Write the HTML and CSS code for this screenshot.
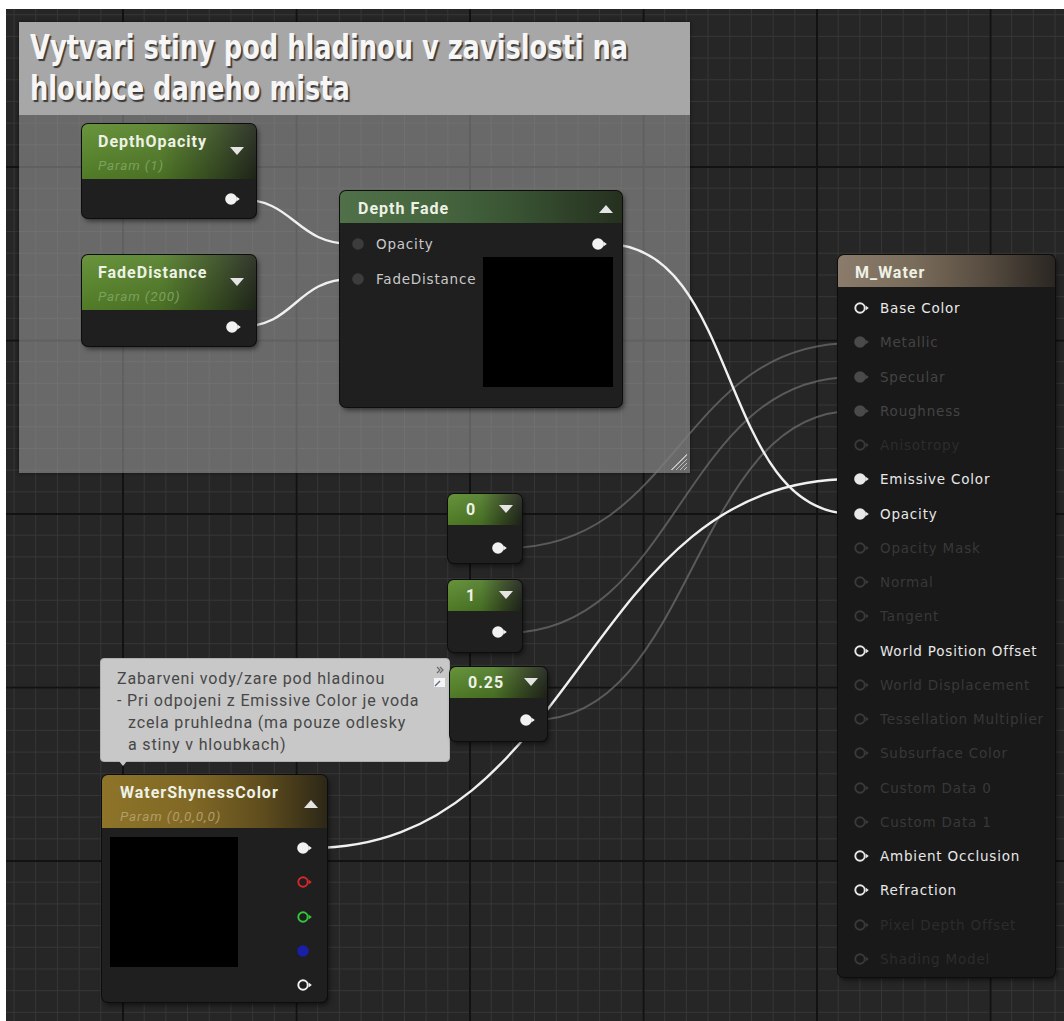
FILE: index.html
```html
<!DOCTYPE html>
<html lang="cs">
<head>
<meta charset="utf-8">
<title>M_Water – Material Graph</title>
<link rel="stylesheet" href="styles.css">
</head>
<body>
<svg class="defs" width="0" height="0" aria-hidden="true">
  <defs>
    <symbol id="pin-fill" viewBox="0 0 16 12">
      <circle cx="6" cy="6" r="5.8" fill="currentColor"/>
      <path d="M11.4 3.6 L14.8 6 L11.4 8.4 Z" fill="currentColor"/>
    </symbol>
    <symbol id="pin-ring" viewBox="0 0 16 12">
      <circle cx="6" cy="6" r="4.7" fill="none" stroke="currentColor" stroke-width="1.9"/>
      <path d="M11.6 3.6 L14.8 6 L11.6 8.4 Z" fill="currentColor"/>
    </symbol>
    <symbol id="pin-dot" viewBox="0 0 16 12">
      <circle cx="6" cy="6" r="5.8" fill="currentColor"/>
    </symbol>
  </defs>
</svg>

<div class="graph">
  <!-- comment frame around the depth fade group -->
  <div class="comment">
    <div class="comment-head"><span class="comment-text">Vytvari stiny pod hladinou v zavislosti na<br>hloubce daneho mista</span></div>
    <div class="comment-grip"></div>
  </div>

  <!-- connections -->
  <svg class="wires" width="1058" height="1012" viewBox="0 0 1058 1012">
    <g class="wire-dim">
      <path d="M500 539 C673 539 674 334 847 334"/>
      <path d="M500 624 C673 624 674 368 847 368"/>
      <path d="M528 711 C688 711 687 402 847 402"/>
    </g>
    <g class="wire">
      <path d="M232 190 C289 190 289 235 346 235"/>
      <path d="M233 318 C290 318 289 270 346 270"/>
      <path d="M600 235 C735 235 712 505 847 505"/>
      <path d="M305 839 C576 839 576 470 847 470"/>
    </g>
  </svg>

  <!-- bubble note -->
  <div class="note">
    <div class="note-line">Zabarveni vody/zare pod hladinou</div>
    <div class="note-line">- Pri odpojeni z Emissive Color je voda</div>
    <div class="note-line indent">zcela pruhledna (ma pouze odlesky</div>
    <div class="note-line indent">a stiny v hloubkach)</div>
    <svg class="note-icons" width="14" height="26" viewBox="0 0 14 26">
      <path d="M5 2 L8 5 L5 8 M8 2 L11 5 L8 8" fill="none" stroke="#6a6a6a" stroke-width="1.2"/>
      <rect x="2" y="13" width="11" height="9" fill="#f4f4f4"/>
      <path d="M3 21 L8 16" stroke="#5d6f86" stroke-width="1.4"/>
    </svg>
  </div>

  <!-- scalar parameter nodes -->
  <div class="node param n-depthopacity">
    <div class="head head-param">
      <div class="head-text">
        <div class="title">DepthOpacity</div>
        <div class="sub sub-green">Param (1)</div>
      </div>
      <span class="tri tri-down"></span>
    </div>
    <div class="body out-body pad-14 pr-15">
      <svg class="pin pin-white"><use href="#pin-fill"/></svg>
    </div>
  </div>

  <div class="node param n-fadedistance">
    <div class="head head-param">
      <div class="head-text">
        <div class="title">FadeDistance</div>
        <div class="sub sub-green">Param (200)</div>
      </div>
      <span class="tri tri-down"></span>
    </div>
    <div class="body out-body pad-11 pr-14">
      <svg class="pin pin-white"><use href="#pin-fill"/></svg>
    </div>
  </div>

  <!-- depth fade expression -->
  <div class="node n-depthfade">
    <div class="head head-fade">
      <div class="head-text"><div class="title">Depth Fade</div></div>
      <span class="tri tri-up tri-fade"></span>
    </div>
    <div class="body fade-body">
      <div class="inputs">
        <div class="in-row"><svg class="pin pin-grey"><use href="#pin-dot"/></svg><span class="label">Opacity</span></div>
        <div class="in-row"><svg class="pin pin-grey"><use href="#pin-dot"/></svg><span class="label">FadeDistance</span></div>
      </div>
      <div class="fade-right">
        <svg class="pin pin-white fade-out"><use href="#pin-fill"/></svg>
        <div class="preview fade-preview"></div>
      </div>
    </div>
  </div>

  <!-- constants -->
  <div class="node param n-const0">
    <div class="head head-const">
      <span class="value">0</span>
      <span class="tri tri-down tri-const"></span>
    </div>
    <div class="body out-body pad-17 pr-14">
      <svg class="pin pin-white"><use href="#pin-fill"/></svg>
    </div>
  </div>

  <div class="node param n-const1">
    <div class="head head-const">
      <span class="value">1</span>
      <span class="tri tri-down tri-const"></span>
    </div>
    <div class="body out-body pad-15 pr-14">
      <svg class="pin pin-white"><use href="#pin-fill"/></svg>
    </div>
  </div>

  <div class="node param n-const025">
    <div class="head head-const">
      <span class="value">0.25</span>
      <span class="tri tri-down tri-const"></span>
    </div>
    <div class="body out-body pad-16 pr-11">
      <svg class="pin pin-white"><use href="#pin-fill"/></svg>
    </div>
  </div>

  <!-- vector parameter -->
  <div class="node n-shyness">
    <div class="head head-gold">
      <div class="head-text">
        <div class="title">WaterShynessColor</div>
        <div class="sub sub-gold">Param (0,0,0,0)</div>
      </div>
      <span class="tri tri-up tri-gold"></span>
    </div>
    <div class="body shyness-body">
      <div class="preview shyness-preview"></div>
      <div class="out-col">
        <svg class="pin pin-white"><use href="#pin-fill"/></svg>
        <svg class="pin pin-red"><use href="#pin-ring"/></svg>
        <svg class="pin pin-green"><use href="#pin-ring"/></svg>
        <svg class="pin pin-blue"><use href="#pin-dot"/></svg>
        <svg class="pin pin-white"><use href="#pin-ring"/></svg>
      </div>
    </div>
  </div>

  <!-- material result node -->
  <div class="node n-water">
    <div class="head head-water">
      <div class="head-text"><div class="title">M_Water</div></div>
    </div>
    <div class="body water-body">
      <div class="row on"><svg class="pin"><use href="#pin-ring"/></svg><span class="label">Base Color</span></div>
      <div class="row dim"><svg class="pin"><use href="#pin-fill"/></svg><span class="label">Metallic</span></div>
      <div class="row dim"><svg class="pin"><use href="#pin-fill"/></svg><span class="label">Specular</span></div>
      <div class="row dim"><svg class="pin"><use href="#pin-fill"/></svg><span class="label">Roughness</span></div>
      <div class="row off dark"><svg class="pin"><use href="#pin-ring"/></svg><span class="label">Anisotropy</span></div>
      <div class="row on"><svg class="pin"><use href="#pin-fill"/></svg><span class="label">Emissive Color</span></div>
      <div class="row on"><svg class="pin"><use href="#pin-fill"/></svg><span class="label">Opacity</span></div>
      <div class="row off"><svg class="pin"><use href="#pin-ring"/></svg><span class="label">Opacity Mask</span></div>
      <div class="row off"><svg class="pin"><use href="#pin-ring"/></svg><span class="label">Normal</span></div>
      <div class="row off"><svg class="pin"><use href="#pin-ring"/></svg><span class="label">Tangent</span></div>
      <div class="row on"><svg class="pin"><use href="#pin-ring"/></svg><span class="label">World Position Offset</span></div>
      <div class="row off"><svg class="pin"><use href="#pin-ring"/></svg><span class="label">World Displacement</span></div>
      <div class="row off"><svg class="pin"><use href="#pin-ring"/></svg><span class="label">Tessellation Multiplier</span></div>
      <div class="row off"><svg class="pin"><use href="#pin-ring"/></svg><span class="label">Subsurface Color</span></div>
      <div class="row off"><svg class="pin"><use href="#pin-ring"/></svg><span class="label">Custom Data 0</span></div>
      <div class="row off"><svg class="pin"><use href="#pin-ring"/></svg><span class="label">Custom Data 1</span></div>
      <div class="row on"><svg class="pin"><use href="#pin-ring"/></svg><span class="label">Ambient Occlusion</span></div>
      <div class="row on"><svg class="pin"><use href="#pin-ring"/></svg><span class="label">Refraction</span></div>
      <div class="row off dark"><svg class="pin"><use href="#pin-ring"/></svg><span class="label">Pixel Depth Offset</span></div>
      <div class="row off dark"><svg class="pin"><use href="#pin-ring"/></svg><span class="label">Shading Model</span></div>
    </div>
  </div>
</div>
</body>
</html>
```

FILE: styles.css
```css
html, body {
  margin: 0;
  background: #ffffff;
}

body {
  padding: 9px 0 0 6px;
  width: 1064px;
  height: 1021px;
  box-sizing: border-box;
  overflow: hidden;
  font-family: "Roboto", "DejaVu Sans", sans-serif;
}

.defs {
  position: absolute;
  width: 0;
  height: 0;
}

/* editor canvas with minor and major grid lines */
.graph {
  position: relative;
  width: 1058px;
  height: 1012px;
  overflow: hidden;
  background:
    linear-gradient(to right, #121212 2px, transparent 2px) 116px 0 / 173.5px 100% repeat-x,
    linear-gradient(to bottom, #121212 2px, transparent 2px) 0 157px / 100% 173.5px repeat-y,
    linear-gradient(to right, #363636 1px, transparent 1px) 7.56px 0 / 21.6875px 100%,
    linear-gradient(to bottom, #363636 1px, transparent 1px) 0 5.19px / 100% 21.6875px,
    #262626;
}

/* comment frame */
.comment {
  position: absolute;
  left: 13px;
  top: 13px;
  width: 671px;
  height: 451px;
  background: rgba(160, 160, 160, 0.55);
  box-shadow: 0 0 3px rgba(0, 0, 0, 0.6);
}

.comment-head {
  height: 93px;
  box-sizing: border-box;
  padding: 5px 0 0 11px;
  background: #a7a7a7;
  overflow: hidden;
}

.comment-text {
  display: inline-block;
  white-space: nowrap;
  transform: scaleX(0.84);
  transform-origin: left top;
  color: #f6f6f6;
  font-family: "DejaVu Sans Condensed", "DejaVu Sans", sans-serif;
  font-weight: 700;
  font-size: 34px;
  line-height: 41px;
  text-shadow: 2px 2px 1px rgba(0, 0, 0, 0.65);
}

.comment-grip {
  position: absolute;
  right: 3px;
  bottom: 3px;
  width: 18px;
  height: 18px;
  background: repeating-linear-gradient(135deg, transparent 0 2px, rgba(220, 220, 220, 0.75) 2px 3px);
  clip-path: polygon(100% 0, 100% 100%, 0 100%);
}

/* wires */
.wires {
  position: absolute;
  left: 0;
  top: 0;
}

.wires path {
  fill: none;
}

.wire path {
  stroke: #f0f0f0;
  stroke-width: 2.4;
}

.wire-dim path {
  stroke: rgba(125, 125, 125, 0.6);
  stroke-width: 2;
}

/* bubble note */
.note {
  position: absolute;
  left: 94px;
  top: 649px;
  width: 350px;
  height: 104px;
  box-sizing: border-box;
  padding: 9px 0 0 16px;
  background: #c8c8c8;
  border: 1px solid #b0b0b0;
  border-radius: 4px;
  color: #474747;
  font-family: "Roboto", sans-serif;
  font-size: 16px;
  line-height: 22px;
  letter-spacing: 0.85px;
  white-space: nowrap;
}

.note::after {
  content: "";
  position: absolute;
  left: 18px;
  bottom: -5px;
  width: 0;
  height: 0;
  border-left: 4px solid transparent;
  border-right: 4px solid transparent;
  border-top: 5px solid #c8c8c8;
}

.note-line.indent {
  padding-left: 11px;
}

.note-icons {
  position: absolute;
  right: 3px;
  top: 6px;
}

/* nodes */
.node {
  position: absolute;
  display: flex;
  flex-direction: column;
  background: #1f1f1f;
  border-radius: 6px;
  box-shadow: 0 0 0 1px #0d0d0d, 2px 3px 5px rgba(0, 0, 0, 0.55);
  overflow: hidden;
}

.head {
  display: flex;
  justify-content: space-between;
  align-items: flex-start;
  flex: none;
  box-sizing: border-box;
}

.head-param {
  height: 55px;
  padding-left: 16px;
  background:
    linear-gradient(to bottom, rgba(255, 255, 255, 0.08), rgba(0, 0, 0, 0.12)),
    linear-gradient(to right, #5c8b2c 0%, #547f29 45%, #3a5222 75%, #22281c 100%);
}

.head-const {
  height: 31px;
  padding-left: 18px;
  align-items: center;
  background:
    linear-gradient(to bottom, rgba(255, 255, 255, 0.08), rgba(0, 0, 0, 0.12)),
    linear-gradient(to right, #5a8a2b 0%, #4f7c28 45%, #35491f 75%, #1f241b 100%);
}

.head-fade {
  height: 32px;
  padding-left: 18px;
  background: linear-gradient(to right, #4f7049 0%, #46663f 35%, #3a5534 60%, #25301f 100%);
}

.head-gold {
  height: 53px;
  padding-left: 18px;
  background: linear-gradient(to right, #8e7429 0%, #806825 40%, #5e4c1d 72%, #2c2717 100%);
}

.head-water {
  height: 32px;
  padding-left: 17px;
  background: linear-gradient(to right, #8a7b6a 0%, #7a6c5b 35%, #574c40 68%, #2a2622 100%);
}

.head-text {
  padding-top: 9px;
}

.title {
  color: #eef2e6;
  font-family: "Roboto", sans-serif;
  font-weight: 700;
  font-size: 16px;
  line-height: 18px;
  letter-spacing: 1px;
  white-space: nowrap;
}

.sub {
  margin-top: 6px;
  font-family: "Roboto", sans-serif;
  font-style: italic;
  font-size: 13.5px;
  line-height: 16px;
  letter-spacing: 0.9px;
  white-space: nowrap;
}

.sub-green {
  color: #7ba15c;
}

.sub-gold {
  color: #b09d68;
}

.value {
  color: #eef2e6;
  font-weight: 700;
  font-size: 16px;
  letter-spacing: 1px;
}

/* dropdown / collapse arrows */
.tri {
  flex: none;
  width: 0;
  height: 0;
  border-left: 7px solid transparent;
  border-right: 7px solid transparent;
}

.tri-down {
  margin: 23px 12px 0 0;
  border-top: 8px solid #e4e4e4;
}

.tri-const {
  margin: -2px 9px 0 0;
}

.tri-up {
  border-bottom: 8px solid #e4e4e4;
}

.tri-fade {
  margin: 14px 9px 0 0;
}

.tri-gold {
  margin: 25px 9px 0 0;
}

/* node bodies */
.body {
  flex: 1;
  box-sizing: border-box;
}

.out-body {
  display: flex;
  justify-content: flex-end;
  align-items: flex-start;
}

.pad-11 { padding-top: 11px; }
.pad-14 { padding-top: 14px; }
.pad-15 { padding-top: 15px; }
.pad-16 { padding-top: 16px; }
.pad-17 { padding-top: 17px; }
.pr-11 { padding-right: 11px; }
.pr-14 { padding-right: 14px; }
.pr-15 { padding-right: 15px; }

.pin {
  display: block;
  flex: none;
  width: 16px;
  height: 12px;
  overflow: visible;
}

.pin-white { color: #f2f2f2; }
.pin-grey { color: #3c3c3c; }
.pin-red { color: #d8262a; }
.pin-green { color: #33c83a; }
.pin-blue { color: #1a1fa8; }

.preview {
  background: #000000;
  flex: none;
}

.label {
  font-family: "DejaVu Sans", sans-serif;
  font-size: 13.5px;
  letter-spacing: 0.8px;
  white-space: nowrap;
}

/* node positions on the canvas */
.n-depthopacity { left: 76px; top: 115px; width: 174px; height: 94px; }
.n-fadedistance { left: 76px; top: 246px; width: 174px; height: 91px; }
.n-depthfade { left: 334px; top: 182px; width: 282px; height: 216px; }
.n-const0 { left: 442px; top: 485px; width: 74px; height: 69px; }
.n-const1 { left: 442px; top: 571px; width: 74px; height: 72px; }
.n-const025 { left: 444px; top: 658px; width: 97px; height: 74px; }
.n-shyness { left: 96px; top: 766px; width: 225px; height: 227px; }
.n-water { left: 832px; top: 246px; width: 217px; height: 722px; background: #191919; }

/* depth fade body */
.fade-body {
  display: flex;
  justify-content: space-between;
  padding: 11px 9px 10px 12px;
}

.inputs {
  display: flex;
  flex-direction: column;
  gap: 15px;
}

.in-row {
  display: flex;
  align-items: center;
  height: 20px;
  gap: 8px;
}

.in-row .label {
  color: #c9c9c9;
}

.fade-right {
  display: flex;
  flex-direction: column;
  align-items: flex-end;
}

.fade-out {
  margin: 4px 5px 0 0;
}

.fade-preview {
  width: 130px;
  height: 130px;
  margin-top: 7px;
}

/* vector param body */
.shyness-body {
  display: flex;
  justify-content: space-between;
  padding: 9px 14px 0 8px;
}

.shyness-preview {
  width: 128px;
  height: 130px;
}

.out-col {
  display: flex;
  flex-direction: column;
  gap: 22.3px;
  padding-top: 5px;
}

/* material inputs */
.water-body {
  padding: 4px 0 0 16px;
}

.row {
  display: flex;
  align-items: center;
  height: 34.26px;
  gap: 10px;
}

.row.on { color: #e8e8e8; }
.row.dim { color: #444444; }
.row.off { color: #383838; }
.row.dark { color: #2c2c2c; }
.row.dark .pin { color: #111111; }
.row.dim .pin { color: #4a4a4a; }
.row.off .pin { color: #3a3a3a; }
```
